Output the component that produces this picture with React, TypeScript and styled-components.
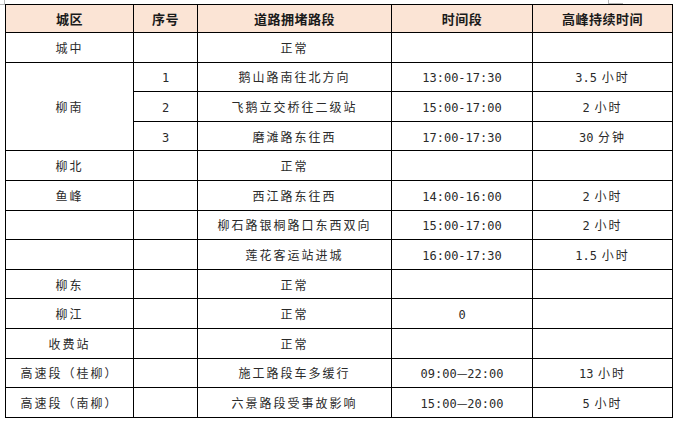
import React from "react";
import styled, { createGlobalStyle } from "styled-components";

type Row = {
  district?: string;
  span?: number;
  skipDistrict?: boolean;
  no?: string;
  road: string;
  time?: string;
  dur?: string;
  unit?: string;
};

const rows: Row[] = [
  { district: "城中", road: "正常" },
  { district: "柳南", span: 3, no: "1", road: "鹅山路南往北方向", time: "13:00-17:30", dur: "3.5", unit: "小时" },
  { skipDistrict: true, no: "2", road: "飞鹅立交桥往二级站", time: "15:00-17:00", dur: "2", unit: "小时" },
  { skipDistrict: true, no: "3", road: "磨滩路东往西", time: "17:00-17:30", dur: "30", unit: "分钟" },
  { district: "柳北", road: "正常" },
  { district: "鱼峰", road: "西江路东往西", time: "14:00-16:00", dur: "2", unit: "小时" },
  { district: "", road: "柳石路银桐路口东西双向", time: "15:00-17:00", dur: "2", unit: "小时" },
  { district: "", road: "莲花客运站进城", time: "16:00-17:30", dur: "1.5", unit: "小时" },
  { district: "柳东", road: "正常" },
  { district: "柳江", road: "正常", time: "0" },
  { district: "收费站", road: "正常" },
  { district: "高速段（桂柳）", road: "施工路段车多缓行", time: "09:00—22:00", dur: "13", unit: "小时" },
  { district: "高速段（南柳）", road: "六景路段受事故影响", time: "15:00—20:00", dur: "5", unit: "小时" },
];

// long dash ranges are written with a full-width dash between two times
const TimeText = ({ value }: { value: string }) => {
  const parts = value.split("—");
  if (parts.length < 2) return <Num>{value}</Num>;
  return (
    <Num>
      {parts[0]}
      <Dash>—</Dash>
      {parts[1]}
    </Num>
  );
};

const App = () => {
  return (
    <>
      <GlobalStyle />
      <Page>
        <CornerLeft />
        <CornerRight />
        <Table>
          <colgroup>
            <col style={{ width: 128 }} />
            <col style={{ width: 64 }} />
            <col style={{ width: 194 }} />
            <col style={{ width: 141 }} />
            <col style={{ width: 140 }} />
          </colgroup>
          <thead>
            <tr>
              <HeadCell>城区</HeadCell>
              <HeadCell>序号</HeadCell>
              <HeadCell>道路拥堵路段</HeadCell>
              <HeadCell>时间段</HeadCell>
              <HeadCell>高峰持续时间</HeadCell>
            </tr>
          </thead>
          <tbody>
            {rows.map((r, i) => (
              <BodyRow key={i}>
                {!r.skipDistrict && <Cell rowSpan={r.span}>{r.district}</Cell>}
                <Cell>{r.no && <Num>{r.no}</Num>}</Cell>
                <Cell>{r.road}</Cell>
                <Cell>{r.time && <TimeText value={r.time} />}</Cell>
                <Cell>
                  {r.dur && (
                    <>
                      <Num>{r.dur}</Num> {r.unit}
                    </>
                  )}
                </Cell>
              </BodyRow>
            ))}
          </tbody>
        </Table>
      </Page>
    </>
  );
};

export default App;

const GlobalStyle = createGlobalStyle`
  html, body {
    margin: 0;
    padding: 0;
    background: #ffffff;
  }
`;

const Page = styled.div`
  position: relative;
  width: 678px;
  height: 424px;
  padding: 4px 0 0 5px;
  box-sizing: border-box;
  background: #ffffff;
`;

const CornerLeft = styled.div`
  position: absolute;
  left: 0;
  top: 0;
  width: 4px;
  height: 4px;
  border-right: 1px solid #b8b8b8;
  border-bottom: 1px solid #b8b8b8;
`;

const CornerRight = styled.div`
  position: absolute;
  left: 608px;
  top: 0;
  width: 14px;
  height: 3px;
  border-left: 1px solid #b8b8b8;
  border-bottom: 1px solid #b8b8b8;
`;

const Table = styled.table`
  width: 667px;
  border-collapse: collapse;
  table-layout: fixed;
  font-family: "Noto Sans CJK SC", "Liberation Sans", sans-serif;
`;

const HeadCell = styled.th`
  height: 27px;
  padding: 0;
  border: 1px solid #000;
  background: #fbe4d5;
  color: #1a1a1a;
  font-size: 13px;
  font-weight: 700;
  letter-spacing: 0.5px;
  text-align: center;
  vertical-align: middle;
`;

const BodyRow = styled.tr`
  height: 29.6px;
`;

const Cell = styled.td`
  padding: 0;
  border: 1px solid #000;
  color: #2a2a2a;
  font-size: 12px;
  font-weight: 400;
  letter-spacing: 2px;
  text-align: center;
  vertical-align: middle;
  white-space: nowrap;
`;

const Num = styled.span`
  font-family: "DejaVu Sans Mono", "Liberation Mono", monospace;
  font-size: 12px;
  letter-spacing: 0;
`;

const Dash = styled.span`
  font-family: "Noto Sans CJK SC", sans-serif;
  font-size: 12px;
`;
